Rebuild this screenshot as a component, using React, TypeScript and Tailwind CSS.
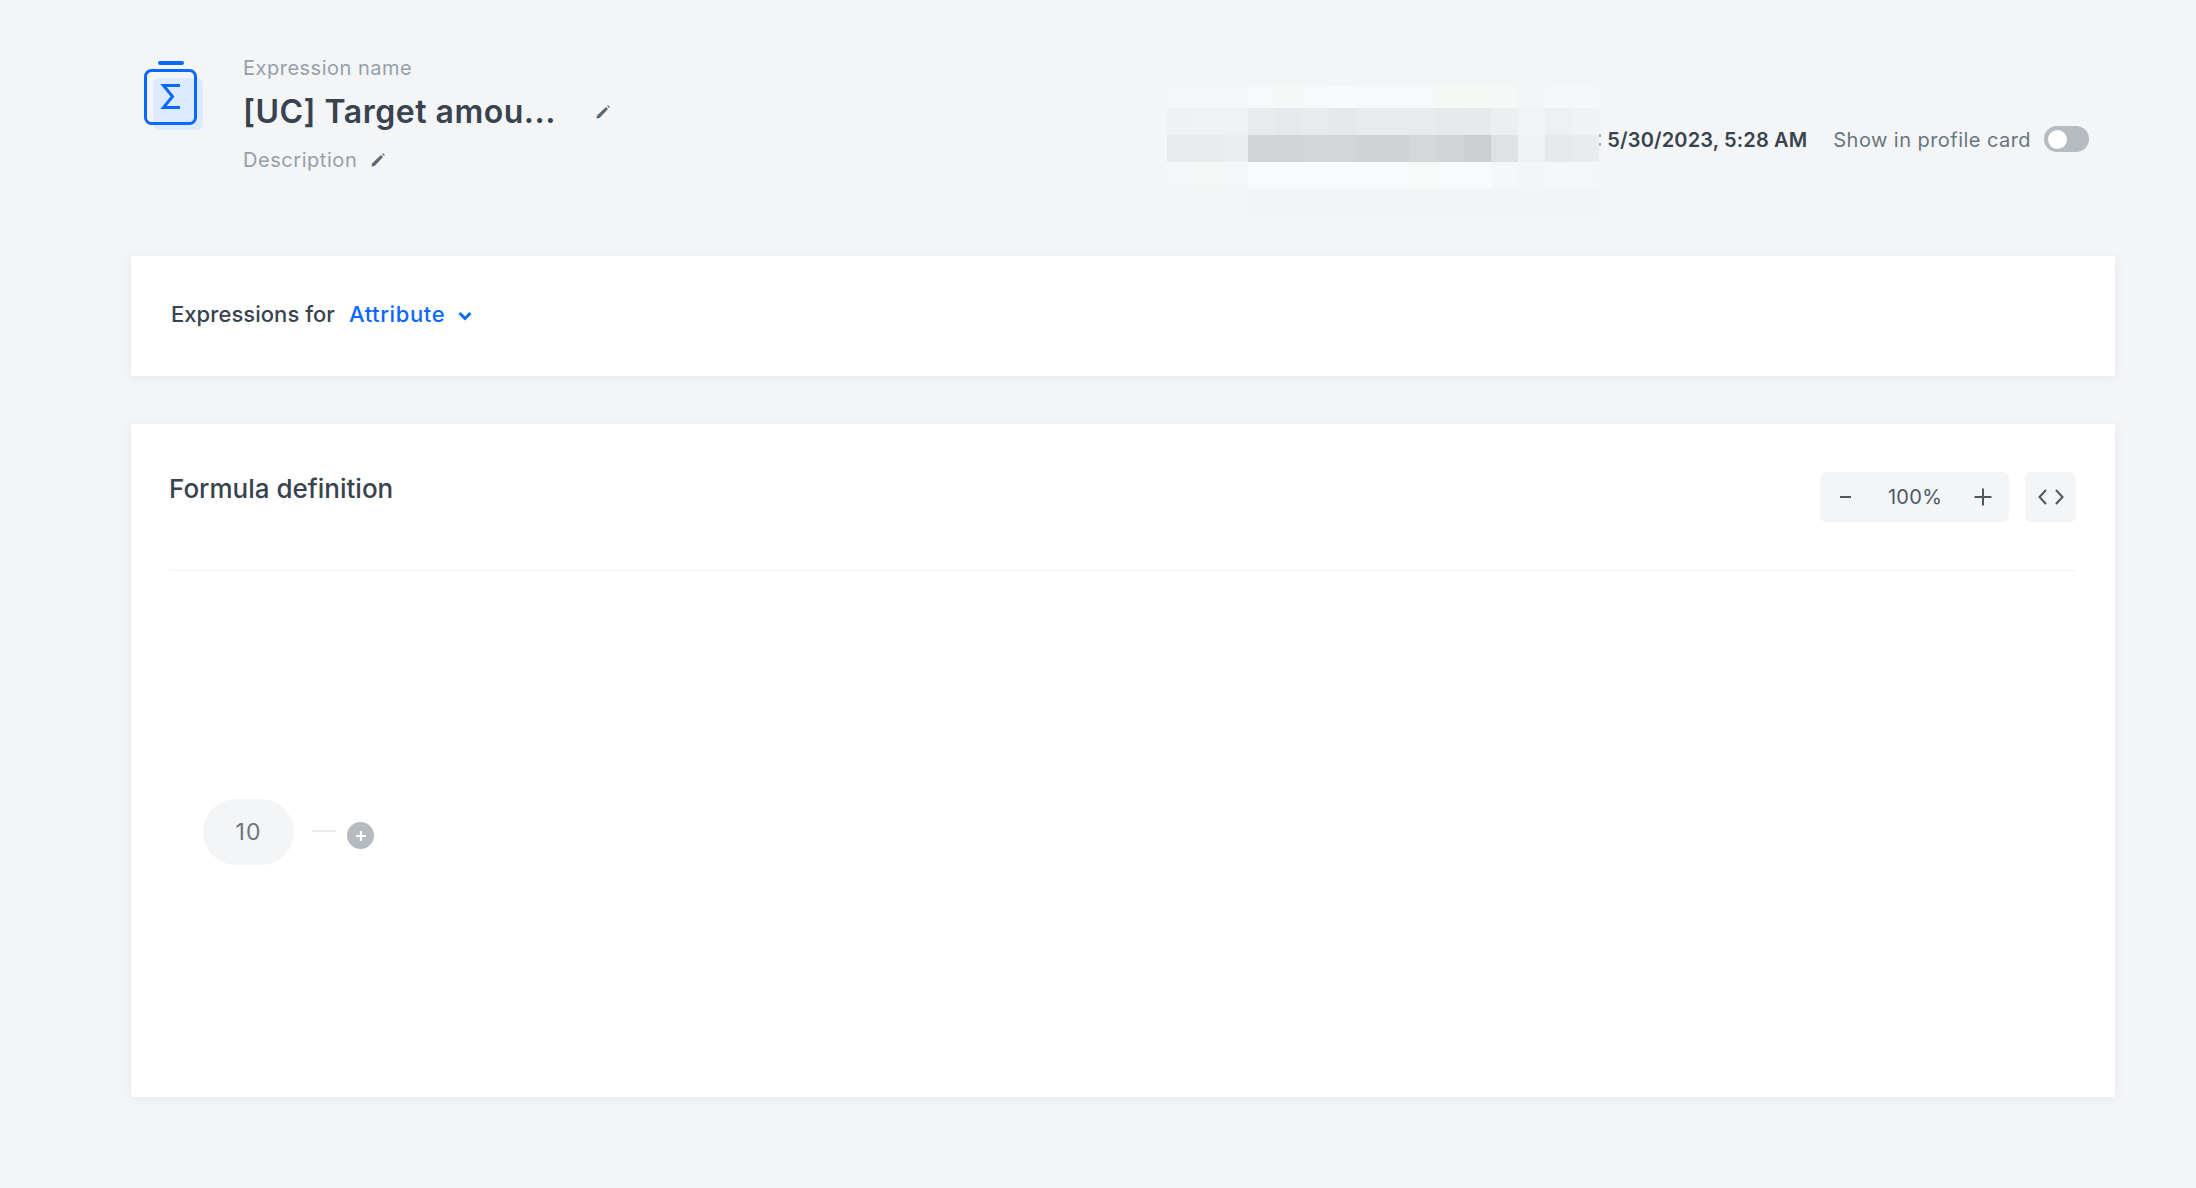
const rows: string[][] = [
  ["#f5f6f8","#f5f6f8","#f5f6f8","#f7f8f9","#f6f8f7","#f7f8f9","#f8f9fa","#f7f8f9","#f7f8f9","#f7f8f9","#f6f8f6","#f6f8f6","#f6f7f7","#f4f5f7","#f6f7f8","#f6f7f8"],
  ["#eef1f2","#eff1f2","#f0f1f3","#e9eaec","#e6e9eb","#e8eaec","#e5e8ea","#e9eaec","#e8eaeb","#e8eaeb","#e6e9ea","#e8e9eb","#edeef0","#f2f3f5","#ecf0f1","#f0f2f3"],
  ["#e8ebed","#e9ecee","#ebedef","#d2d5d8","#d2d5d8","#d3d6d9","#d3d6d9","#d1d4d7","#d1d4d7","#d5d8da","#d2d5d8","#ccced1","#e0e1e4","#eff2f3","#e6e9eb","#e9ecee"],
  ["#f5f6f8","#f5f7f6","#f5f6f8","#f9fafb","#f9fafb","#f9fafb","#f9fafb","#f9fafb","#f9fafb","#f8faf9","#f9fafb","#f9fafb","#f6f7f9","#f4f5f7","#f6f7f9","#f5f6f8"],
  ["#f4f5f7","#f4f5f7","#f4f5f7","#f2f3f5","#f2f3f5","#f2f3f5","#f2f3f5","#f2f3f5","#f2f3f5","#f2f3f5","#f2f3f5","#f2f3f5","#f3f4f6","#f3f4f6","#f3f4f6","#f3f4f6"],
];
const rowY = [0, 22, 49, 76, 103];
const rowH = [22, 27, 27, 27, 28];

function Pencil({ className }: { className: string }) {
  return (
    <svg viewBox="0 0 14 14" className={className} fill="none">
      <path d="M1.4 12.6 L1.8 10 L9.6 2.6 L11.4 4.4 L4 12.2 Z" fill="currentColor" />
      <path d="M10.6 1.8 L11.4 1 L13 2.6 L12.2 3.4 Z" fill="currentColor" />
    </svg>
  );
}

export default function App() {
  return (
    <div className="min-h-[1188px] bg-[#f3f5f7] pl-[131px] pr-[81px] font-['Inter',sans-serif] text-[#384350]">
      <header className="flex h-[256px] items-start">
        <svg viewBox="0 0 60 72" className="mt-[59px] ml-[13px] h-[72px] w-[60px] shrink-0" fill="none">
          <rect x="9" y="19" width="50" height="52" rx="6" fill="#dcebff" />
          <rect x="14" y="2" width="26" height="4" rx="2" fill="#0b68ff" />
          <rect x="1.5" y="11.5" width="50" height="53" rx="6" stroke="#0b68ff" strokeWidth="3" />
          <path d="M36 26.5 H19.5 L28.5 37.5 L19.5 48.5 H36" stroke="#0b68ff" strokeWidth="3" />
        </svg>
        <div className="ml-[39px] mt-[56px] flex flex-col">
          <div className="text-[20px] leading-[24px] tracking-[0.5px] text-[#95a0aa]">Expression name</div>
          <div className="mt-[12px] flex items-center">
            <span className="text-[32px] leading-[40px] tracking-[0.5px] font-semibold">[UC] Target amou...</span>
            <Pencil className="ml-[39px] h-[16px] w-[16px] text-[#5d6873]" />
          </div>
          <div className="mt-[15px] flex items-center">
            <span className="text-[20px] leading-[26px] tracking-[0.55px] text-[#95a0aa]">Description</span>
            <Pencil className="ml-[13px] h-[16px] w-[16px] text-[#5d6873]" />
          </div>
        </div>
        <div className="ml-auto mt-[86px] flex items-start">
          <svg viewBox="0 0 432 131" className="h-[131px] w-[433px] shrink-0" shapeRendering="crispEdges">
            {rows.map((r, i) =>
              r.map((c, j) => (
                <rect key={`${i}-${j}`} x={j * 27} y={rowY[i]} width="27.5" height={rowH[i] + 0.5} fill={c} />
              )),
            )}
          </svg>
          <div className="mt-[40px] flex h-[28px] items-center">
            <span className="flex w-[2px] flex-col gap-[6px]">
              <span className="h-[3px] w-[2px] bg-[#a9b0b7]" />
              <span className="h-[3px] w-[2px] bg-[#a9b0b7]" />
            </span>
            <span className="ml-[6px] text-[20px] tracking-[0.15px] font-semibold">5/30/2023, 5:28 AM</span>
            <span className="ml-[26px] text-[20px] tracking-[0.45px] text-[#6a7581]">Show in profile card</span>
            <span className="mb-[2px] ml-[13px] mr-[26px] flex h-[26px] w-[45px] items-center rounded-full bg-[#b5bbc0] pl-[4px]">
              <span className="h-[19px] w-[19px] rounded-full bg-white" />
            </span>
          </div>
        </div>
      </header>

      <section className="flex h-[120px] items-center bg-white pb-[4px] pl-[40px] shadow-[0_2px_10px_rgba(56,67,80,0.07)]">
        <span className="text-[22px] tracking-[0.05px] font-[550]">Expressions for</span>
        <span className="ml-[14px] text-[22px] tracking-[0.6px] font-[550] text-[#0b68ff]">Attribute</span>
        <svg viewBox="0 0 14 10" className="ml-[13px] mt-[3px] h-[10px] w-[14px]" fill="none">
          <path d="M1.5 2 L7 7.5 L12.5 2" stroke="#0b68ff" strokeWidth="3" />
        </svg>
      </section>

      <section className="mt-[48px] flex h-[673px] flex-col bg-white pl-[38px] pr-[39px] pt-[47px] shadow-[0_2px_10px_rgba(56,67,80,0.07)]">
        <div className="ml-[1px] flex h-[100px] items-start justify-between border-b border-[#f2f3f5]">
          <h2 className="-ml-[1px] text-[26px] leading-[36px] font-[550]">Formula definition</h2>
          <div className="mt-[1px] flex">
            <div className="flex h-[50px] w-[189px] items-center justify-between rounded-[6px] bg-[#f3f5f7] pl-[20px] pr-[17px]">
              <svg viewBox="0 0 12 12" className="h-[12px] w-[12px]" fill="none">
                <path d="M0 6 H11" stroke="#4c5865" strokeWidth="2" />
              </svg>
              <span className="ml-[4px] text-[20px] tracking-[0.3px] text-[#4c5865]">100%</span>
              <svg viewBox="0 0 18 18" className="h-[18px] w-[18px]" fill="none">
                <path d="M0.5 9 H17.5 M9 0.5 V17.5" stroke="#4c5865" strokeWidth="2" />
              </svg>
            </div>
            <div className="ml-[16px] flex h-[50px] w-[51px] items-center justify-center rounded-[6px] bg-[#f3f5f7]">
              <svg viewBox="0 0 26 16" className="h-[16px] w-[26px]" fill="none">
                <path d="M8 1 L1.5 8 L8 15 M18 1 L24.5 8 L18 15" stroke="#4c5865" strokeWidth="2" />
              </svg>
            </div>
          </div>
        </div>
        <div className="mt-[228px] ml-[34px] flex items-start">
          <div className="flex h-[66px] w-[91px] items-center justify-center rounded-[33px] bg-[#f3f5f7] text-[23px] tracking-[1px] text-[#6a7581]">
            10
          </div>
          <div className="ml-[18px] mt-[31px] h-[2px] w-[24px] bg-[#e8eaec]" />
          <div className="ml-[11px] mt-[23px] flex h-[27px] w-[27px] items-center justify-center rounded-full bg-[#b5bbc0]">
            <svg viewBox="0 0 12 12" className="h-[12px] w-[12px]" fill="none">
              <path d="M1 6 H11 M6 1 V11" stroke="#ffffff" strokeWidth="2.2" />
            </svg>
          </div>
        </div>
      </section>
    </div>
  );
}
